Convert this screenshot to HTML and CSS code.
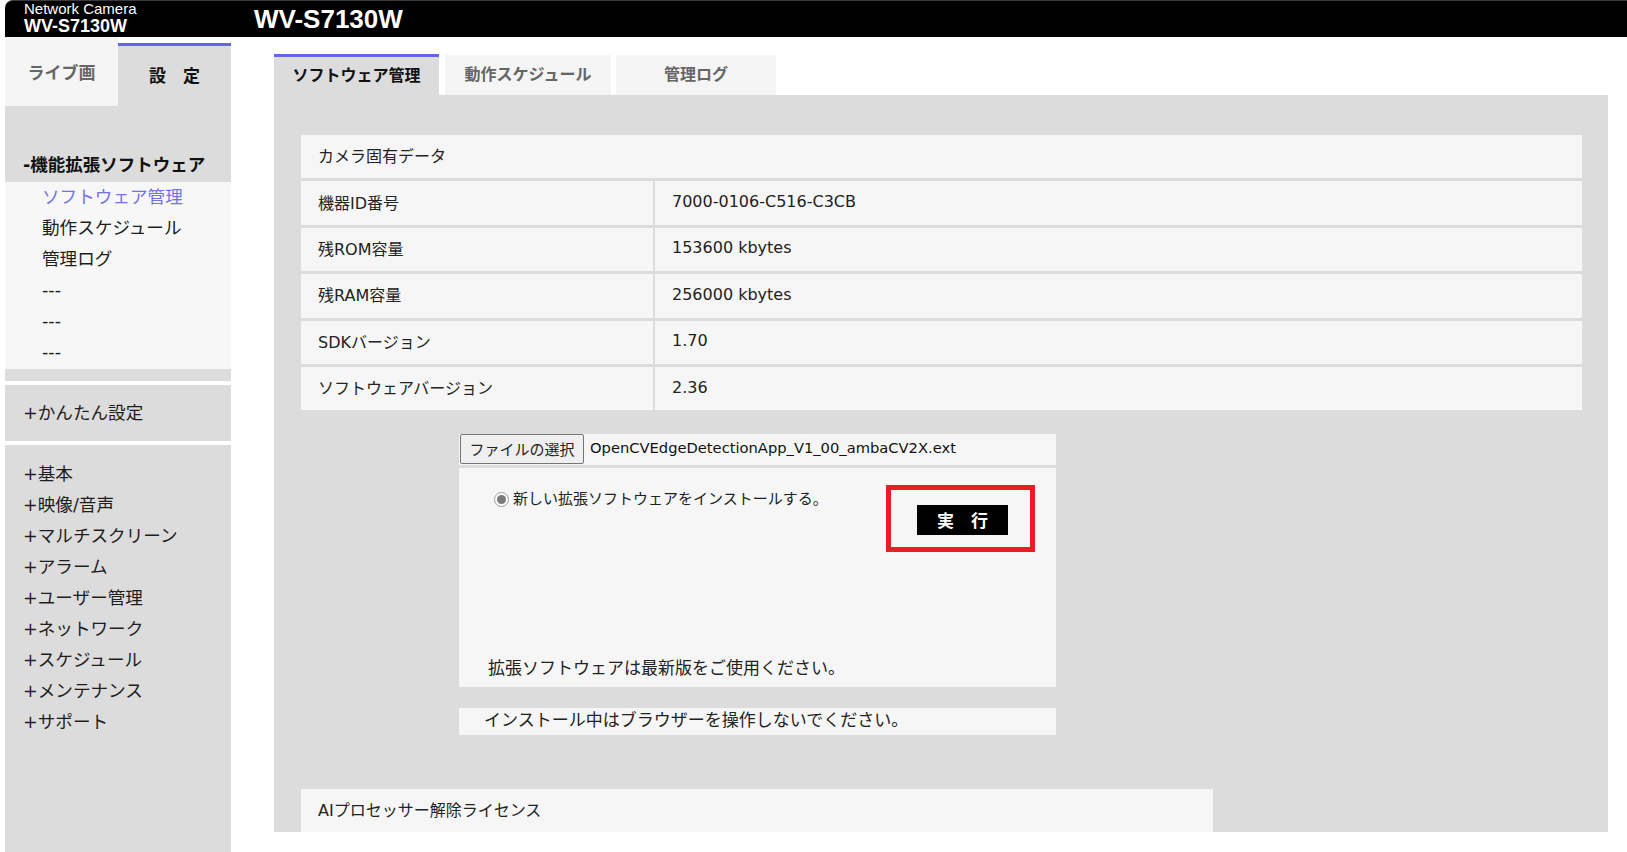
FILE: index.html
```
<!DOCTYPE html>
<html lang="ja">
<head>
<meta charset="utf-8">
<title>WV-S7130W</title>
<link rel="stylesheet" href="styles.css">
</head>
<body>
<header class="topbar">
  <div class="brand">
    <div class="brand-sub">Network Camera</div>
    <div class="brand-model">WV-S7130W</div>
  </div>
  <div class="title">WV-S7130W</div>
</header>
<div class="layout">
  <aside class="sidebar">
    <div class="side-tabs">
      <div class="side-tab live">ライブ画</div>
      <div class="side-tab setup">設　定</div>
    </div>
    <div class="group group-ext">
      <div class="group-head">-機能拡張ソフトウェア</div>
      <ul class="sub-list">
        <li class="active">ソフトウェア管理</li>
        <li>動作スケジュール</li>
        <li>管理ログ</li>
        <li>---</li>
        <li>---</li>
        <li>---</li>
      </ul>
    </div>
    <div class="group group-easy">
      <div class="menu-item">+かんたん設定</div>
    </div>
    <div class="group group-main">
      <div class="menu-item">+基本</div>
      <div class="menu-item">+映像/音声</div>
      <div class="menu-item">+マルチスクリーン</div>
      <div class="menu-item">+アラーム</div>
      <div class="menu-item">+ユーザー管理</div>
      <div class="menu-item">+ネットワーク</div>
      <div class="menu-item">+スケジュール</div>
      <div class="menu-item">+メンテナンス</div>
      <div class="menu-item">+サポート</div>
    </div>
  </aside>
  <main class="content">
    <nav class="tabs">
      <div class="tab tab-active">ソフトウェア管理</div>
      <div class="tab tab-schedule">動作スケジュール</div>
      <div class="tab tab-log">管理ログ</div>
    </nav>
    <section class="panel">
      <div class="data-table">
        <div class="cell head">カメラ固有データ</div>
        <div class="cell">機器ID番号</div><div class="cell val">7000-0106-C516-C3CB</div>
        <div class="cell">残ROM容量</div><div class="cell val">153600 kbytes</div>
        <div class="cell">残RAM容量</div><div class="cell val">256000 kbytes</div>
        <div class="cell">SDKバージョン</div><div class="cell val">1.70</div>
        <div class="cell">ソフトウェアバージョン</div><div class="cell val">2.36</div>
      </div>
      <div class="install">
        <div class="file-row">
          <button class="file-btn" type="button">ファイルの選択</button>
          <span class="file-name">OpenCVEdgeDetectionApp_V1_00_ambaCV2X.ext</span>
        </div>
        <div class="install-box">
          <div class="install-top">
            <label class="radio-label"><span class="radio"></span>新しい拡張ソフトウェアをインストールする。</label>
            <div class="highlight">
              <button class="exec-btn" type="button">実　行</button>
            </div>
          </div>
          <div class="install-note">拡張ソフトウェアは最新版をご使用ください。</div>
        </div>
        <div class="warn-box">インストール中はブラウザーを操作しないでください。</div>
      </div>
      <div class="ai-box">AIプロセッサー解除ライセンス</div>
    </section>
  </main>
</div>
</body>
</html>
```
FILE: styles.css
```
* { box-sizing: border-box; }
html, body { margin: 0; padding: 0; }
body {
  background: #ffffff;
  font-family: "DejaVu Sans", "Noto Sans CJK JP", sans-serif;
  color: #1e1e1e;
  width: 1627px;
  height: 852px;
  overflow: hidden;
}

/* top bar */
.topbar {
  margin-left: 5px;
  height: 37px;
  background: #000;
  border-top: 1px solid #3a3a3a;
  border-top-left-radius: 8px;
  display: flex;
  color: #fff;
  font-family: "Liberation Sans", Arial, sans-serif;
}
.brand {
  width: 249px;
  padding-left: 19px;
}
.brand-sub { font-size: 15px; line-height: 15px; }
.brand-model { font-size: 18px; line-height: 20px; font-weight: bold; }
.title { font-size: 26px; font-weight: bold; line-height: 36px; }

/* layout */
.layout { display: flex; align-items: flex-start; }

/* sidebar */
.sidebar {
  margin-left: 5px;
  width: 226px;
  height: 815px;
  background: #dcdcdc;
  font-size: 17.6px;
}
.side-tabs { display: flex; height: 69px; background: #fff; }
.side-tab {
  width: 113px;
  display: flex;
  align-items: center;
  justify-content: center;
  font-family: "Noto Sans CJK JP", sans-serif;
  font-weight: bold;
  font-size: 17px;
}
.side-tab.live { background: #f5f5f5; color: #666; padding-bottom: 1px; }
.side-tab.setup {
  margin-top: 6px;
  background: #dcdcdc;
  border-top: 3px solid #6464e4;
  color: #111;
  padding-bottom: 4px;
}
.group-head {
  padding: 44px 0 1px 18px;
  line-height: 31px;
  font-weight: bold;
  font-size: 17.5px;
  color: #111;
}
.sub-list {
  list-style: none;
  margin: 0;
  padding: 0 0 1px 0;
  background: #f7f7f7;
}
.sub-list li {
  line-height: 31px;
  padding-left: 37px;
  color: #1e1e1e;
}
.sub-list li.active { color: #7373e6; }
.group-ext { padding-bottom: 12px; border-bottom: 4px solid #fff; }
.group-easy { padding: 13px 0 12px; border-bottom: 4px solid #fff; }
.group-main { padding-top: 14px; }
.menu-item { line-height: 31px; padding-left: 18px; color: #1e1e1e; }

/* main */
.content { margin-left: 43px; width: 1334px; padding-top: 17px; }
.tabs { display: flex; align-items: flex-start; height: 41px; }
.tab {
  display: flex;
  align-items: center;
  justify-content: center;
  font-family: "Noto Sans CJK JP", sans-serif;
  font-weight: bold;
  font-size: 16px;
  padding-bottom: 4px;
}
.tab-active {
  width: 165px;
  height: 41px;
  background: #dcdcdc;
  border-top: 3px solid #6464e4;
  color: #111;
}
.tab-schedule, .tab-log {
  margin-top: 1px;
  height: 40px;
  background: #f5f5f5;
  color: #666;
}
.tab-schedule { width: 166px; margin-left: 6px; }
.tab-log { width: 160px; margin-left: 5px; }

.panel {
  background: #dcdcdc;
  height: 737px;
  overflow: hidden;
  padding: 40px 26px 0 27px;
  font-size: 16px;
}
.data-table {
  display: grid;
  grid-template-columns: 352px 1fr;
  grid-auto-rows: 43.4px;
  gap: 3px 2px;
  background: #dcdcdc;
}
.cell {
  background: #f6f6f6;
  display: flex;
  align-items: center;
  padding: 0 0 3px 17px;
  color: #222;
}
.cell.head { grid-column: 1 / 3; }

.install { width: 597px; margin: 24px 0 0 158px; }
.file-row {
  height: 31px;
  background: #f6f6f6;
  display: flex;
  align-items: flex-start;
  padding-left: 1px;
}
.file-btn {
  width: 124px;
  height: 30px;
  margin: 0;
  padding: 0 0 2px;
  background: #efefef;
  border: 1px solid #767676;
  border-radius: 2px;
  font-family: "Noto Sans CJK JP", sans-serif;
  font-size: 15px;
  color: #222;
}
.file-name {
  margin-left: 6px;
  font-size: 14.7px;
  line-height: 28px;
  color: #111;
}
.install-box {
  margin-top: 3px;
  height: 219px;
  background: #f6f6f6;
  display: flex;
  flex-direction: column;
  justify-content: space-between;
  padding: 17px 21px 7px 0;
}
.install-top { display: flex; justify-content: space-between; align-items: flex-start; }
.radio-label {
  display: flex;
  align-items: center;
  margin-top: 2px;
  padding-left: 35px;
  font-size: 15px;
  line-height: 24px;
  color: #222;
}
.radio {
  width: 15px;
  height: 15px;
  border-radius: 50%;
  border: 1px solid #9c9c9c;
  background: #fff;
  margin-right: 4px;
  display: flex;
  align-items: center;
  justify-content: center;
}
.radio::after {
  content: "";
  width: 9px;
  height: 9px;
  border-radius: 50%;
  background: #7a7a7a;
}
.highlight {
  width: 149px;
  height: 67px;
  border: 5px solid #ec1c24;
  padding: 15px 0 0 26px;
}
.exec-btn {
  width: 91px;
  height: 30px;
  margin: 0;
  padding: 0;
  border: none;
  background: #000;
  color: #fff;
  font-family: "Noto Sans CJK JP", sans-serif;
  font-weight: bold;
  font-size: 17px;
  line-height: 30px;
}
.install-note {
  padding-left: 29px;
  font-size: 17px;
  line-height: 24px;
  color: #222;
}
.warn-box {
  margin-top: 21px;
  height: 27px;
  background: #f6f6f6;
  padding: 0 0 3px 25px;
  font-size: 17px;
  line-height: 24px;
  color: #222;
}
.ai-box {
  margin-top: 54px;
  width: 912px;
  height: 60px;
  background: #f6f6f6;
  padding-left: 17px;
  line-height: 44px;
  color: #222;
}
```
